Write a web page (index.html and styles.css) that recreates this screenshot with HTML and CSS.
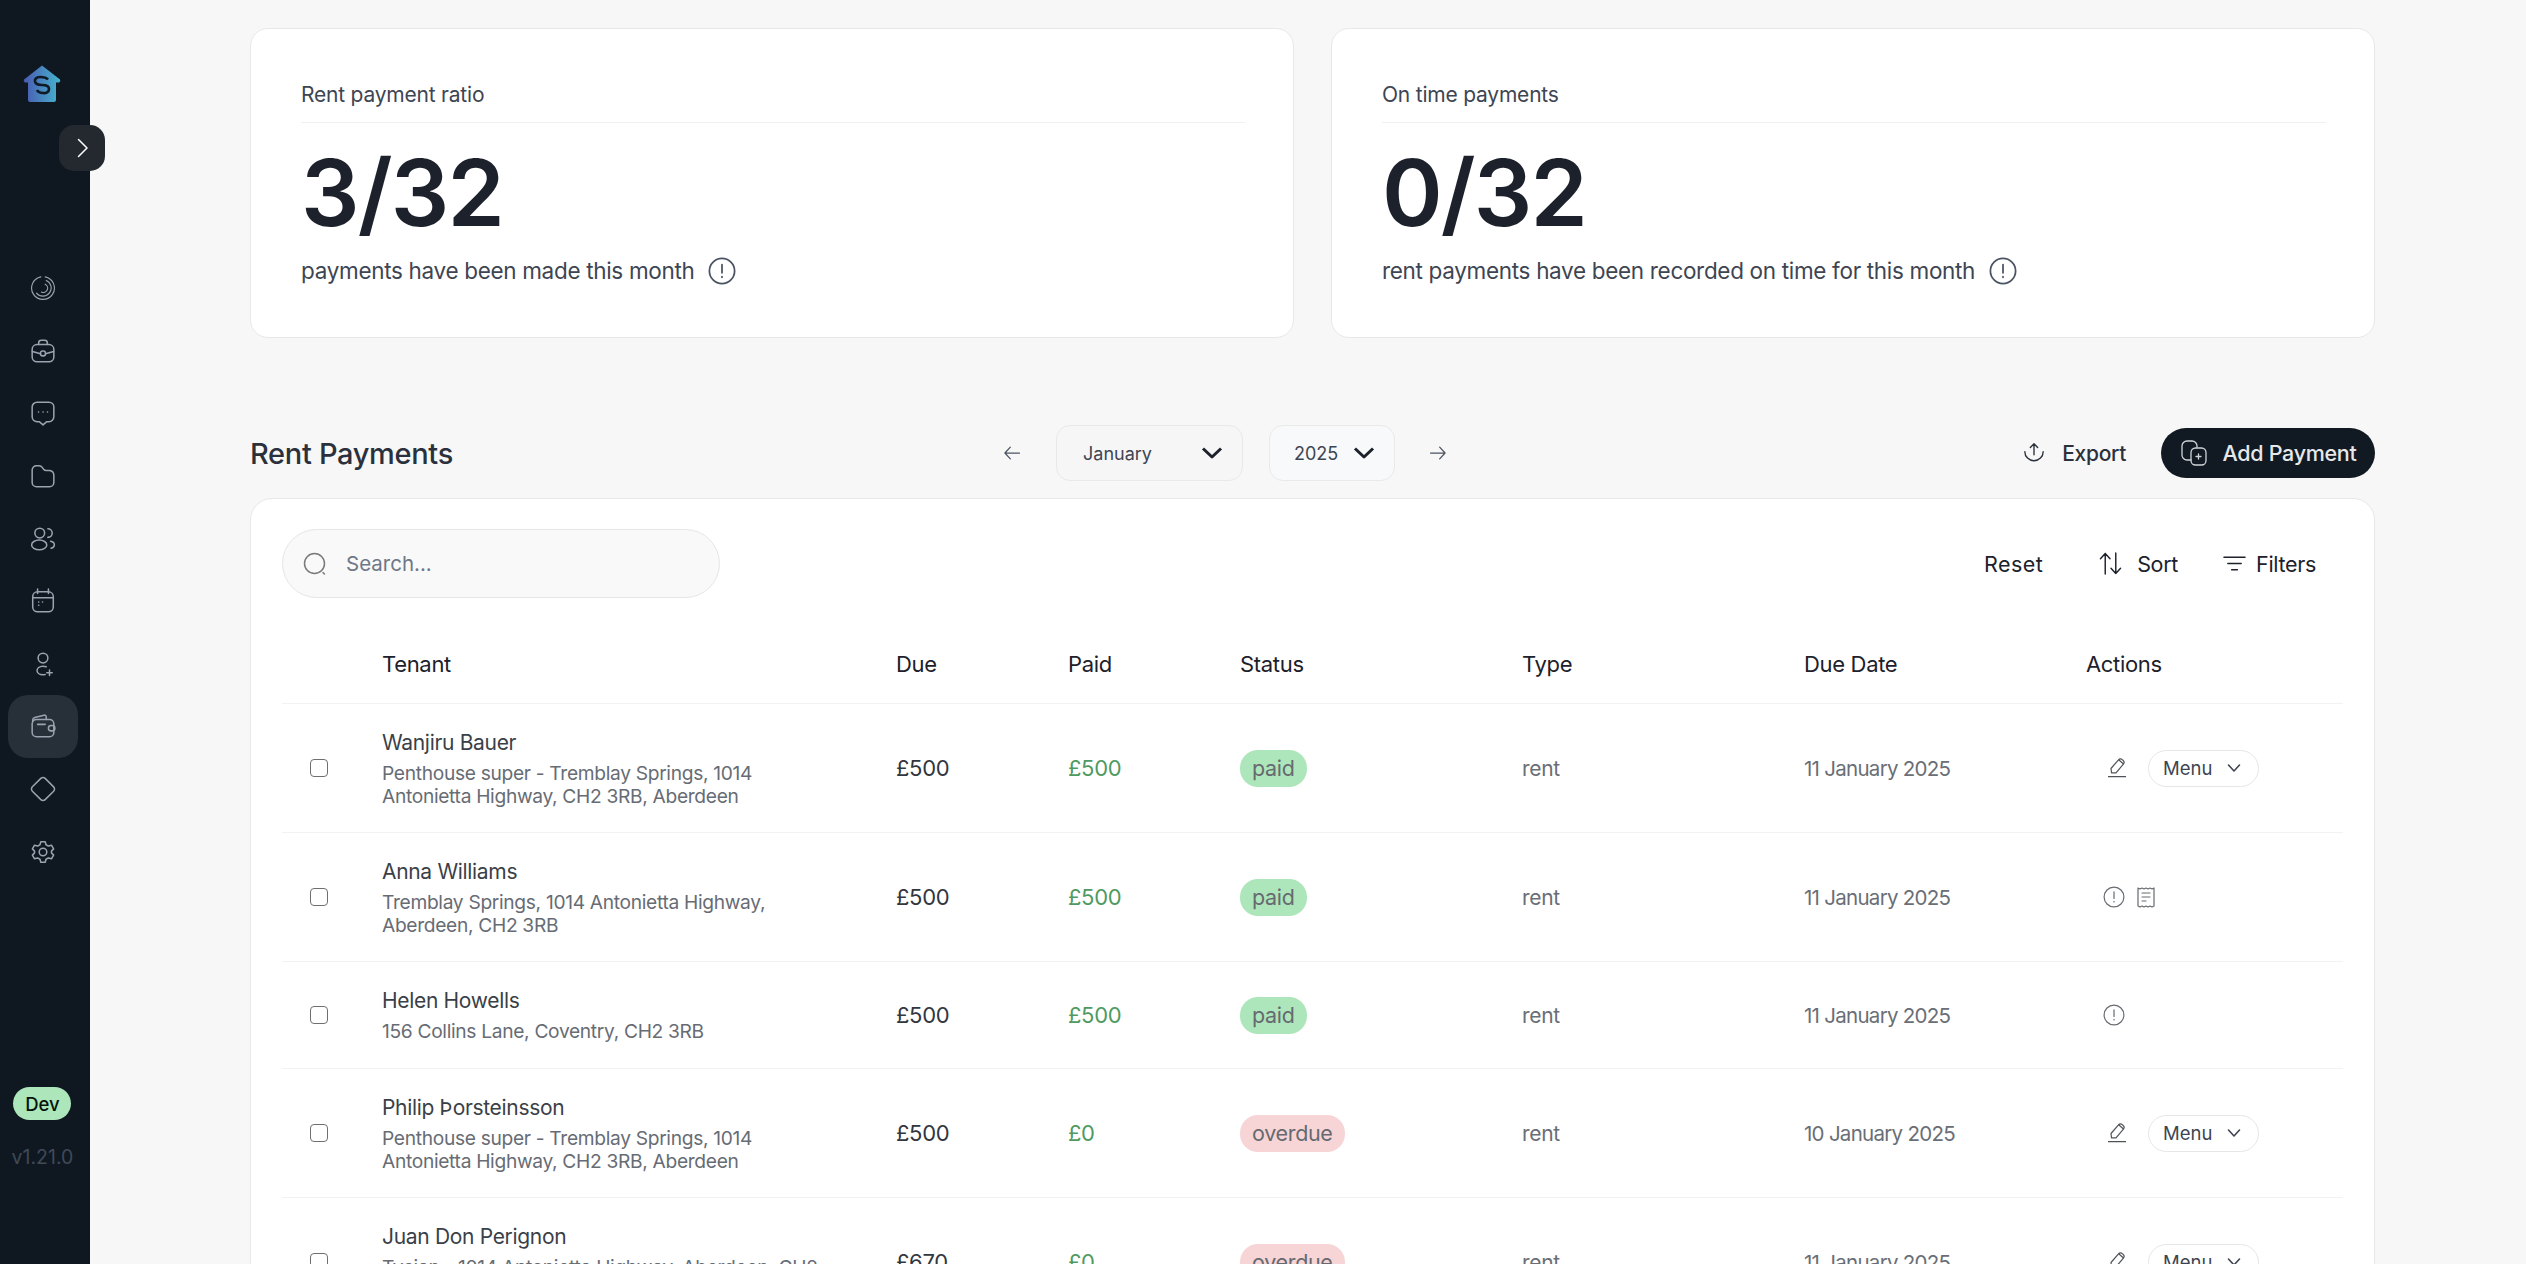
FILE: index.html
```html
<!DOCTYPE html>
<html lang="en">
<head>
<meta charset="utf-8">
<title>Rent Payments</title>
<link rel="stylesheet" href="styles.css">
</head>
<body>
<div class="app">
  <aside class="sidebar">
    <svg class="logo" viewBox="0 0 38 38" width="38" height="38">
      <defs><linearGradient id="lg" x1="0" y1="0" x2="1" y2="0"><stop offset="0" stop-color="#4a59b0"/><stop offset="1" stop-color="#45b5cf"/></linearGradient></defs>
      <path d="M19 0.5 L37 14.5 Q38 16.5 36 17.5 H33 V35 Q33 37 31 37 H7 Q5 37 5 35 V17.5 H2 Q0 16.5 1 14.5 Z" fill="url(#lg)"/>
      <path d="M25 14.5 C23 12 20 12 17 12 C13 12 11.5 14.5 12 16.5 C12.5 19 15 20 19 20 C23 20 26 21 26 24 C26 27 23 28.5 20 28 C17 28 15 27 14 25" fill="none" stroke="#0f1a24" stroke-width="2.6"/>
    </svg>
    <button class="toggle"><svg viewBox="0 0 24 24" width="24" height="24"><path d="M8.5 3.5 L17 12 L8.5 20.5" fill="none" stroke="#fff" stroke-width="1.5"/></svg></button>
    <nav class="nav">
      <a class="nav-item"><svg class="thin" viewBox="0 0 24 24"><path d="M10 1.700A10.500 10.500 0 1 0 14 1.700M15 5A7.600 7.600 0 1 1 6 16.700M14 8.500A4 4 0 0 1 10.500 15.700"/></svg></a>
      <a class="nav-item"><svg viewBox="0 0 24 24"><rect x="2" y="6" width="20" height="16" rx="4.5"/><path d="M8 6V4.5A2.500 2.500 0 0 1 10.5 2h3A2.500 2.500 0 0 1 16 4.500V6M2.200 12.500 9.700 14.500M14.300 14.500 21.800 12.500"/><rect x="9.700" y="12" width="4.600" height="4.500" rx="2"/></svg></a>
      <a class="nav-item"><svg viewBox="0 0 24 24"><path d="M6.500 2h11A4.500 4.500 0 0 1 22 6.500v9a4.500 4.500 0 0 1-4.500 4.500h-2L12 23l-3.500-3h-2A4.500 4.500 0 0 1 2 15.500v-9A4.500 4.500 0 0 1 6.500 2Z"/><path d="M7.800 11h.1M12 11h.1M16.100 11h.1"/></svg></a>
      <a class="nav-item"><svg viewBox="0 0 24 24"><path d="M2 7V6.500A4 4 0 0 1 6 2.500h2.500c1.500 0 2.200.7 3 1.800l1 1.400c.6.800 1 1.300 2.500 1.300h3A4.500 4.500 0 0 1 22 11.500V18a4 4 0 0 1-4 4H6a4 4 0 0 1-4-4Z"/></svg></a>
      <a class="nav-item"><svg viewBox="0 0 24 24"><circle cx="9" cy="6.500" r="4.500"/><ellipse cx="8.500" cy="17.500" rx="7" ry="4.500"/><path d="M16.500 2.500a4 4 0 0 1 0 8M19 14c2.500.5 3.500 2 3.500 3.200S21.500 20 19.500 20.500"/></svg></a>
      <a class="nav-item"><svg viewBox="0 0 24 24"><rect x="2.500" y="3.500" width="19" height="18.500" rx="4.500"/><path d="M7 1v4M17 1v4M2.500 9h19M8 13h.1M11.500 13h.1M8 16h.1"/></svg></a>
      <a class="nav-item"><svg viewBox="0 0 24 24"><circle cx="12" cy="6.500" r="4.500"/><path d="M15 14.600c-1-.4-2-.6-3-.6-3.500 0-5.500 2-5.500 4s2 4 5.500 4c.7 0 1.400-.1 2-.2M15.500 20h5M18 17.500v5"/></svg></a>
      <a class="nav-item active"><svg viewBox="0 0 24 24"><rect x="2" y="6" width="20" height="16" rx="4"/><path d="M2.500 8V6.500c0-1 .8-2 1.800-2.300L13 2c1-.2 2 .5 2 1.500V6M7 10.500h7"/><rect x="17" y="11.500" width="6" height="5" rx="2.500"/></svg></a>
      <a class="nav-item"><svg viewBox="0 0 24 24"><path d="M10 2.200 2.200 10a2.800 2.800 0 0 0 0 4L10 21.800a2.800 2.800 0 0 0 4 0l7.800-7.800a2.800 2.800 0 0 0 0-4L14 2.200a2.800 2.800 0 0 0-4 0Z"/></svg></a>
      <a class="nav-item"><svg viewBox="0 0 24 24"><circle cx="12" cy="12" r="3.500"/><path d="M10 2.500h4l.8 2.800 2.200 1.200 2.800-.8 2 3.400-2 2.100v1.600l2 2.100-2 3.400-2.800-.8-2.200 1.200-.8 2.800h-4l-.8-2.800-2.200-1.200-2.800.8-2-3.400 2-2.100v-1.600l-2-2.100 2-3.400 2.800.8 2.200-1.200Z"/></svg></a>
    </nav>
    <div class="side-foot">
      <span class="env">Dev</span>
      <span class="version">v1.21.0</span>
    </div>
  </aside>

  <main class="main">
    <section class="stats">
      <div class="stat">
        <div class="stat-title">Rent payment ratio</div>
        <div class="stat-num">3/32</div>
        <div class="stat-sub"><span>payments have been made this month</span>
          <svg class="info-lg" viewBox="0 0 24 24"><circle cx="12" cy="12" r="10.800"/><path d="M12 6.500v7M12 16.800v.6"/></svg></div>
      </div>
      <div class="stat">
        <div class="stat-title">On time payments</div>
        <div class="stat-num">0/32</div>
        <div class="stat-sub"><span>rent payments have been recorded on time for this month</span>
          <svg class="info-lg" viewBox="0 0 24 24"><circle cx="12" cy="12" r="10.800"/><path d="M12 6.500v7M12 16.800v.6"/></svg></div>
      </div>
    </section>

    <section class="head">
      <h1 class="head-title">Rent Payments</h1>
      <div class="period">
        <svg class="arrow" viewBox="0 0 24 24"><path d="M10 5 3.500 12l6.500 7M4 12h17"/></svg>
        <div class="select month"><span>January</span><svg viewBox="0 0 24 24"><path d="M3 7.500 12 16l9-8.500"/></svg></div>
        <div class="select year"><span>2025</span><svg viewBox="0 0 24 24"><path d="M3 7.500 12 16l9-8.500"/></svg></div>
        <svg class="arrow" viewBox="0 0 24 24"><path d="M14 5l6.500 7-6.500 7M20 12H3"/></svg>
      </div>
      <div class="head-actions">
        <button class="export"><svg viewBox="0 0 24 24"><path d="M12 14V2M8 6l4-4 4 4M2 10.500A10 10 0 0 0 22 10.500"/></svg><span>Export</span></button>
        <button class="add"><svg viewBox="0 0 28 28"><path d="M11 21H7a5 5 0 0 1-5-5V7a5 5 0 0 1 5-5h5a5 5 0 0 1 5 5v1"/><rect x="11" y="9" width="15" height="17" rx="4.500"/><path d="M18.500 15v5M16 17.500h5"/></svg><span>Add Payment</span></button>
      </div>
    </section>

    <section class="panel">
      <div class="toolbar">
        <label class="search">
          <svg viewBox="0 0 24 24"><circle cx="11.500" cy="11.500" r="10"/><path d="M20 20.500l1.500 1.500"/></svg>
          <span>Search...</span>
        </label>
        <div class="tools">
          <button class="tool reset">Reset</button>
          <button class="tool sort"><svg viewBox="0 0 24 24"><path d="M6.500 23V1.500M1.500 7l5-5.500 5 5.500M17.500 1v21.500M12.500 17l5 5.500 5-5.500"/></svg><span>Sort</span></button>
          <button class="tool filter"><svg viewBox="0 0 24 24"><path d="M1 5.500h22M5 12h14M9 18.500h6"/></svg><span>Filters</span></button>
        </div>
      </div>

      <div class="table">
        <div class="row header">
          <div></div><div>Tenant</div><div>Due</div><div>Paid</div><div>Status</div><div>Type</div><div>Due Date</div><div>Actions</div>
        </div>

        <div class="row">
          <div class="check"><span class="box"></span></div>
          <div class="tenant"><div class="name">Wanjiru Bauer</div><div class="addr">Penthouse super - Tremblay Springs, 1014 Antonietta Highway, CH2 3RB, Aberdeen</div></div>
          <div class="due">£500</div><div class="paid">£500</div>
          <div><span class="badge ok">paid</span></div>
          <div class="muted">rent</div><div class="muted date">11 January 2025</div>
          <div class="actions">
            <svg class="pencil" viewBox="0 0 18 20"><path d="M3.500 14.800 3 10.500 10.500 1.800a2.600 2.600 0 0 1 3.700-.2l1 .9a2.600 2.600 0 0 1 .2 3.600L8 14.800ZM11 2l4.500 4M0 18.700h18"/></svg>
            <span class="menu">Menu<svg viewBox="0 0 14 10"><path d="M1.500 2 7 8l5.500-6"/></svg></span>
          </div>
        </div>

        <div class="row">
          <div class="check"><span class="box"></span></div>
          <div class="tenant"><div class="name">Anna Williams</div><div class="addr">Tremblay Springs, 1014 Antonietta Highway, Aberdeen, CH2 3RB</div></div>
          <div class="due">£500</div><div class="paid">£500</div>
          <div><span class="badge ok">paid</span></div>
          <div class="muted">rent</div><div class="muted date">11 January 2025</div>
          <div class="actions tight">
            <svg class="info" viewBox="0 0 24 24"><circle cx="12" cy="12" r="10.800"/><path d="M12 6.500v7M12 16.800v.6"/></svg>
            <svg class="doc" viewBox="0 0 18 22"><path d="M1 2l2 1 2-1 2 1 2-1 2 1 2-1 2 1 2-1v18l-2 1-2-1-2 1-2-1-2 1-2-1-2 1-2-1ZM5 7h8M5 11h8M5 15h4"/></svg>
          </div>
        </div>

        <div class="row short">
          <div class="check"><span class="box"></span></div>
          <div class="tenant"><div class="name">Helen Howells</div><div class="addr">156 Collins Lane, Coventry, CH2 3RB</div></div>
          <div class="due">£500</div><div class="paid">£500</div>
          <div><span class="badge ok">paid</span></div>
          <div class="muted">rent</div><div class="muted date">11 January 2025</div>
          <div class="actions tight">
            <svg class="info" viewBox="0 0 24 24"><circle cx="12" cy="12" r="10.800"/><path d="M12 6.500v7M12 16.800v.6"/></svg>
          </div>
        </div>

        <div class="row">
          <div class="check"><span class="box"></span></div>
          <div class="tenant"><div class="name">Philip Þorsteinsson</div><div class="addr">Penthouse super - Tremblay Springs, 1014 Antonietta Highway, CH2 3RB, Aberdeen</div></div>
          <div class="due">£500</div><div class="paid">£0</div>
          <div><span class="badge late">overdue</span></div>
          <div class="muted">rent</div><div class="muted date">10 January 2025</div>
          <div class="actions">
            <svg class="pencil" viewBox="0 0 18 20"><path d="M3.500 14.800 3 10.500 10.500 1.800a2.600 2.600 0 0 1 3.700-.2l1 .9a2.600 2.600 0 0 1 .2 3.600L8 14.800ZM11 2l4.500 4M0 18.700h18"/></svg>
            <span class="menu">Menu<svg viewBox="0 0 14 10"><path d="M1.500 2 7 8l5.500-6"/></svg></span>
          </div>
        </div>

        <div class="row">
          <div class="check"><span class="box"></span></div>
          <div class="tenant"><div class="name">Juan Don Perignon</div><div class="addr">Tycjan - 1014 Antonietta Highway, Aberdeen, CH2 3RB</div></div>
          <div class="due">£670</div><div class="paid">£0</div>
          <div><span class="badge late">overdue</span></div>
          <div class="muted">rent</div><div class="muted date">11 January 2025</div>
          <div class="actions">
            <svg class="pencil" viewBox="0 0 18 20"><path d="M3.500 14.800 3 10.500 10.500 1.800a2.600 2.600 0 0 1 3.700-.2l1 .9a2.600 2.600 0 0 1 .2 3.600L8 14.800ZM11 2l4.500 4M0 18.700h18"/></svg>
            <span class="menu">Menu<svg viewBox="0 0 14 10"><path d="M1.500 2 7 8l5.500-6"/></svg></span>
          </div>
        </div>
      </div>
    </section>
  </main>
</div>
</body>
</html>
```
FILE: styles.css
```css
* { box-sizing: border-box; }
html, body { margin: 0; height: 100%; overflow: hidden; }
body { font-family: Inter, "Liberation Sans", sans-serif; background: #f7f7f7; color: #1c212b; letter-spacing: -0.02em; }
button { font: inherit; letter-spacing: inherit; border: 0; background: none; color: inherit; padding: 0; }
svg { fill: none; stroke: currentColor; stroke-width: 1.5; stroke-linecap: round; stroke-linejoin: round; flex: none; }

.app { display: flex; height: 1264px; overflow: hidden; }

.sidebar { position: relative; flex: 0 0 90px; background: #0f1821; display: flex; flex-direction: column; align-items: center; padding: 65px 5px 0 0; }
.logo { margin-left: -2px; stroke: none; }
.logo path { stroke-linecap: butt; }
.toggle { position: absolute; left: 59px; top: 125px; width: 46px; height: 46px; border-radius: 15px; background: #24292f; display: flex; align-items: center; justify-content: center; z-index: 2; }
.nav { display: flex; flex-direction: column; align-items: center; margin-top: 154px; }
.nav-item { width: 70px; height: 62.6px; display: flex; align-items: center; justify-content: center; color: #9aa3af; border-radius: 20px; }
.nav-item svg { width: 26px; height: 26px; stroke-width: 1.4; }
.nav-item svg.thin { stroke-width: 1.05; }
.nav-item.active { background: #272f38; }
.side-foot { margin-top: auto; padding-bottom: 95px; display: flex; flex-direction: column; align-items: center; gap: 25px; }
.env { width: 58px; height: 33px; border-radius: 17px; background: #ade6ba; color: #06130b; font-size: 18.5px; font-weight: 500; display: flex; align-items: center; justify-content: center; letter-spacing: 0; }
.version { color: #3f4958; font-size: 19.5px; line-height: 24px; letter-spacing: 0; }

.main { flex: 1; min-width: 0; padding: 28px 151px 0 160px; }

.stats { display: grid; grid-template-columns: 1fr 1fr; gap: 37px; }
.stat { height: 310px; background: #fff; border: 1px solid #e8e8e8; border-radius: 18px; padding: 50px 48px 0 50px; }
.stat-title { font-size: 21px; line-height: 32px; color: #3e4552; padding-bottom: 11px; border-bottom: 1px solid #f0f0f0; letter-spacing: -0.01em; }
.stat-num { font-size: 92px; line-height: 112px; font-weight: 600; color: #1c212b; margin-top: 14px; letter-spacing: -0.02em; }
.stat-sub { display: flex; align-items: center; gap: 14px; font-size: 22.5px; line-height: 32px; color: #3e4552; margin-top: 6px; }
.info-lg { width: 28px; height: 28px; color: #4b5463; }

.head { position: relative; display: flex; align-items: center; justify-content: space-between; height: 56px; margin-top: 87px; }
.head-title { margin: 0; font-size: 29px; font-weight: 500; color: #2b313c; }
.period { position: absolute; left: 752px; top: 0; display: flex; align-items: center; height: 56px; }
.arrow { width: 20px; height: 20px; color: #4b5463; }
.select { height: 56px; border: 1px solid #e9e9e9; border-radius: 14px; display: flex; align-items: center; font-size: 18px; color: #3e4552; letter-spacing: 0; justify-content: space-between; }
.select svg { width: 24px; height: 24px; color: #1c212b; stroke-width: 3; stroke-linecap: butt; }
.month { width: 187px; margin-left: 34px; padding: 0 18px 0 26px; background: #f6f6f7; }
.year { width: 126px; margin: 0 33px 0 26px; padding: 0 18px 0 24px; background: #f8f9fb; }

.head-actions { display: flex; align-items: center; gap: 35px; }
.export { display: flex; align-items: center; gap: 17px; font-size: 21px; font-weight: 500; color: #2b313c; }
.export svg { width: 22px; height: 22px; }
.add { width: 214px; height: 50px; border-radius: 25px; background: #111a22; color: #e6e8ea; display: flex; align-items: center; justify-content: center; gap: 15px; font-size: 21.5px; font-weight: 500; }
.add svg { width: 28px; height: 28px; color: #d0d4d8; stroke-width: 1.3; }

.panel { margin-top: 17px; background: #fff; border: 1px solid #e8e8e8; border-radius: 22px; padding: 30px 31px 0 31px; height: 800px; }
.toolbar { display: flex; align-items: center; justify-content: space-between; height: 69px; }
.search { width: 438px; height: 69px; border: 1px solid #e6e6e6; border-radius: 35px; background: #f9f9f9; display: flex; align-items: center; gap: 19px; padding: 0 0 0 20px; font-size: 20.5px; color: #6e7887; letter-spacing: 0; }
.search svg { width: 24px; height: 24px; color: #7a7a7a; }
.tools { display: flex; align-items: center; margin-right: 27px; font-size: 21.5px; color: #1c212b; }
.tool { display: flex; align-items: center; }
.tool span { display: block; }
.reset { margin-right: 56px; letter-spacing: 0.02em; }
.sort { gap: 15px; margin-right: 45px; }
.sort svg { width: 23px; height: 23px; }
.filter { gap: 10px; }
.filter svg { width: 23px; height: 23px; }

.table { margin-top: 36px; }
.row { display: grid; grid-template-columns: 100px 514px 172px 172px 282px 282px 282px 1fr; align-items: center; height: 129.2px; border-bottom: 1px solid #f2f2f2; font-size: 22px; }
.row.short { height: 106.6px; }
.row.header { height: 70px; padding-bottom: 9px; font-size: 22px; color: #1c212b; }
.check { display: flex; padding-left: 28px; }
.box { width: 18px; height: 18px; border: 1.5px solid #6f6f6f; border-radius: 4px; background: #fff; display: block; }
.tenant { width: 450px; }
.name { font-size: 21px; line-height: 28px; color: #3a3f48; margin-bottom: 5px; }
.addr { font-size: 19.2px; line-height: 23px; color: #676c74; }
.due { color: #32363e; }
.paid { color: #4f9a62; }
.muted { color: #6a6e76; font-size: 21px; }
.date { font-size: 20.5px; letter-spacing: -0.035em; }
.badge { display: inline-flex; align-items: center; height: 37px; padding: 0 12px; border-radius: 18px; font-size: 21.5px; color: #666a70; }
.ok { background: #ade6ba; }
.late { background: #f7d5d6; }
.actions { display: flex; align-items: center; padding-left: 22px; }
.actions.tight { padding-left: 17px; gap: 12px; }
.pencil { width: 18px; height: 20px; color: #4f5358; stroke-width: 1.2; }
.menu { margin-left: 22px; width: 111px; height: 37px; border: 1px solid #e6e6e6; border-radius: 19px; display: flex; align-items: center; justify-content: space-between; padding: 0 17px 0 14px; font-size: 18.5px; color: #3e4552; letter-spacing: 0; }
.menu svg { width: 14px; height: 10px; color: #3e4552; stroke-width: 1.6; }
.info { width: 22px; height: 22px; color: #666a70; stroke-width: 1.3; }
.doc { width: 18px; height: 22px; color: #666a70; stroke-width: 1.2; }
```
